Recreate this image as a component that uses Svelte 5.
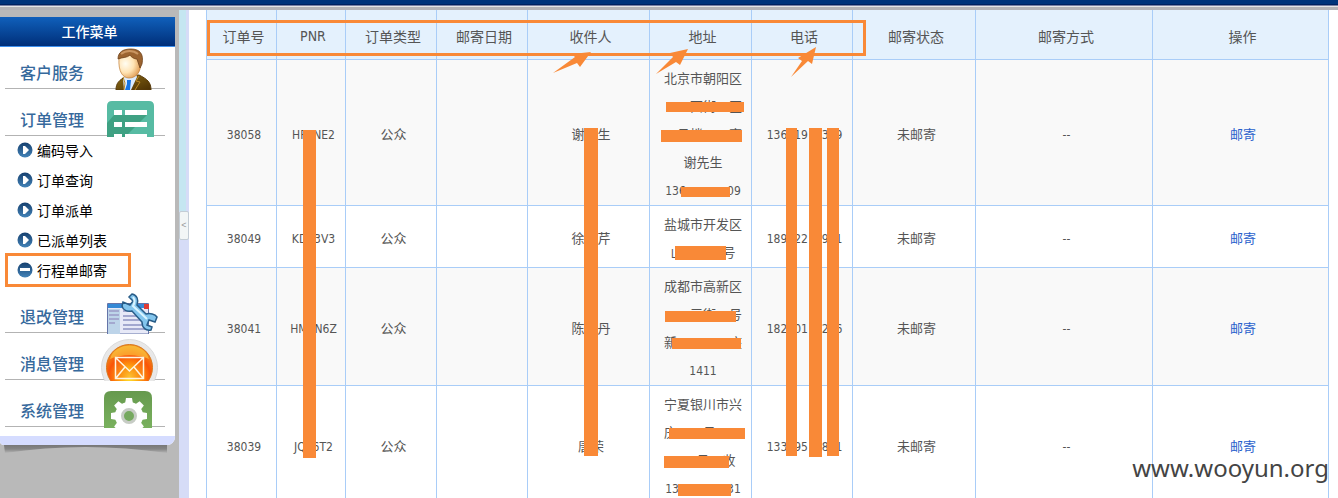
<script>
  const submenu = ['编码导入', '订单查询', '订单派单', '已派单列表', '行程单邮寄'];
  const sections = [
    { label: '客户服务', icon: 'person' },
    { label: '订单管理', icon: 'list', open: true },
    { label: '退改管理', icon: 'tool' },
    { label: '消息管理', icon: 'mail' },
    { label: '系统管理', icon: 'gear' }
  ];
  const columns = [
    { title: '订单号', width: 70 },
    { title: 'PNR', width: 69 },
    { title: '订单类型', width: 91 },
    { title: '邮寄日期', width: 91 },
    { title: '收件人', width: 122 },
    { title: '地址', width: 102 },
    { title: '电话', width: 101 },
    { title: '邮寄状态', width: 123 },
    { title: '邮寄方式', width: 177 },
    { title: '操作', width: 176 }
  ];
  const total = columns.reduce((sum, c) => sum + c.width, 0);
  // \u2007 and \u3000 hold the place of masked digits and characters
  const rows = [
    { id: '38058', pnr: 'HF\u2007NE2', name: '谢\u3000生', phone: '136\u200719\u2007\u20073\u20079',
      address: ['北京市朝阳区', '\u3000\u3000西街\u3000区', '\u3000号楼\u3000\u3000室', '谢先生', '136\u2007\u2007\u2007\u2007\u2007\u200709'] },
    { id: '38049', pnr: 'KD\u20073V3', name: '徐\u3000芹', phone: '189\u200722\u2007\u20079\u20071',
      address: ['盐城市开发区', '山\u3000\u3000\u3000号'] },
    { id: '38041', pnr: 'HM\u2007N6Z', name: '陈\u3000丹', phone: '182\u200701\u2007\u20072\u20076',
      address: ['成都市高新区', '\u3000\u3000三街\u3000号', '新\u3000\u3000\u3000\u3000座', '1411'] },
    { id: '38039', pnr: 'JQ\u20076T2', name: '唐荣', phone: '133\u200795\u2007\u20078\u20071',
      address: ['宁夏银川市兴', '庆\u3000\u3000号\u3000\u3000', '\u3000\u3000号\u3000收', '13\u2007\u2007\u2007\u2007\u2007\u2007\u200731'] }
  ];
  // masks: x, y, width, height inside the content pane
  const masks = [
    [114, 120, 13, 328], [395, 118, 14, 328],
    [597, 118, 11, 328], [620, 118, 13, 329], [638, 118, 12, 328],
    [477, 92, 78, 10], [472, 120, 81, 12], [492, 177, 49, 10],
    [486, 236, 51, 14], [476, 301, 71, 11], [483, 328, 69, 11],
    [480, 418, 76, 11], [475, 446, 65, 12], [489, 474, 53, 12]
  ];
  const arrows = [
    '364,63 386,47 383,44 402,42 391,57 388,53',
    '467,64 484,47 481,43 499,39 491,55 487,52',
    '602,67 613,51 609,48 627,37 623,54 619,51'
  ];
</script>

{#snippet icon(kind)}
  <svg class="icon" width="58" height="42" viewBox="0 0 58 42" aria-hidden="true">
    {#if kind === 'person'}
      <defs>
        <radialGradient id="face" cx=".3" cy=".4" r=".75"><stop stop-color="#fffdf2" /><stop offset=".5" stop-color="#ffe3b3" /><stop offset="1" stop-color="#dc9144" /></radialGradient>
        <linearGradient id="suit" x2="1" y2="1"><stop stop-color="#8d6c14" /><stop offset="1" stop-color="#4b3004" /></linearGradient>
      </defs>
      <path d="M15 42c0-7 3-10 11-14l12-1c8 4 12 7 12 15z" fill="url(#suit)" stroke="#593b0b" />
      <path d="M22 30l5-3 8-1 1 3-6 13h-7z" fill="#dcecff" />
      <path d="M26 32l4 0-1 10h-5l2-6z" fill="#1675e5" />
      <path d="M22 29l2 6-1 7M38 28l-3 5 4 1-5 8" fill="none" stroke="#bd8a27" />
      <path d="M18 10C17 24 22 30 28 30c8 0 12-7 12-16 0-9-19-10-22-4z" fill="url(#face)" stroke="#c27d35" stroke-width=".7" />
      <path d="M17 11c0-7 5-10 13-10 9 0 13 5 11 15l-2 4-3-9c-3 0-6-2-7-4-3 3-7 2-12 4z" fill="#9b632f" stroke="#6e421c" stroke-width=".8" />
      <path d="M20 6c5-4 12-4 17 0" fill="none" stroke="#c99561" stroke-width="2" />
    {:else if kind === 'list'}
      <path d="M6 42V11q0-5 5-5h37q5 0 5 5v31z" fill="#57bba3" />
      <path d="M6 28L13 20h33L24 42H6z" fill="#3fa183" />
      <path d="M13 15h8v5h-8zM24 15h22v5H24zM13 27h8v5h-8zM24 27h22v5H24zM13 39h8v3h-8zM24 39h22v3H24z" fill="#fff" />
    {:else if kind === 'tool'}
      <path d="M6.500 11.500h41V42h-41z" fill="#e7e9f7" stroke="#6574a8" />
      <path d="M7 12h40v4H7z" fill="#3489d6" /><path d="M43 12h5v5h-5z" fill="#df3c35" />
      <path d="M7 17h12v25H7z" fill="#bdd4e9" />
      <path d="M8 19h10M8 23h10M8 27h10M8 31h6M22 19h20M22 24h20M22 28h20M22 33h20M22 37h24" stroke="#a3a8cf" stroke-width="2" />
      <path d="M31 2l-3 3 4 4-3 4-7-3-1 4c1 4 5 6 10 5l10 11c0 6 4 9 9 8l1-3-5-2 2-5 6 2 2-5c-2-3-7-4-11-3l-9-9c2-5 0-10-5-11z" fill="#83c5ed" stroke="#295d88" stroke-width="1.500" />
      <path d="M32 5q3 4 0 9l14 13" fill="none" stroke="#d9f4ff" stroke-width="2" />
    {:else if kind === 'mail'}
      <defs>
        <radialGradient id="orb" cx=".5" cy=".7" r=".65"><stop stop-color="#fff03a" /><stop offset=".25" stop-color="#ffb514" /><stop offset=".7" stop-color="#fa5407" /><stop offset="1" stop-color="#f08b1b" /></radialGradient>
      </defs>
      <circle cx="28.500" cy="28.500" r="28" fill="#e8e8e8" stroke="#dadada" />
      <circle cx="28.500" cy="28.500" r="23" fill="url(#orb)" stroke="#d8761b" />
      <path d="M9 20c5-18 34-18 39 0-11-5-28-5-39 0z" fill="#ffe24f" opacity=".5" />
      <path d="M14.500 18.500h28v21h-28zM15 19l13.500 13L42 19M15 39l9-11M42 39l-9-11" fill="#f76b1d" fill-opacity=".35" stroke="#fff5df" stroke-width="1.500" />
    {:else}
      <defs><linearGradient id="tile" x2="0" y2="1"><stop stop-color="#66994e" /><stop offset="1" stop-color="#79b15e" /></linearGradient></defs>
      <path d="M3 42V12q0-7 7-7h34q7 0 7 7v30z" fill="url(#tile)" />
      <g fill="#fff">
        {#each [0, 45, 90, 135, 180, 225, 270, 315] as angle}
          <path d="M24 18l1-6h6l1 6z" transform="rotate({angle} 28 30)" />
        {/each}
      </g>
      <circle cx="28" cy="30" r="14" fill="#fff" />
      <circle cx="28" cy="30" r="6.500" fill="#76a95f" stroke="#c7ccc5" stroke-width="3" />
    {/if}
  </svg>
{/snippet}

<div class="app">
  <header class="topbar"></header>
  <div class="body">
    <aside>
      <div class="panel">
        <h1>工作菜单</h1>
        <nav>
          {#each sections as s}
            <a class="section" href="#menu"><span>{s.label}</span>{@render icon(s.icon)}</a>
            {#if s.open}
              <ul>
                {#each submenu as label, i}
                  <li class:active={i === 4}>
                    <a href="#list">
                      <svg width="16" height="16" viewBox="0 0 16 16" aria-hidden="true">
                        <defs><linearGradient id="ball{i}" x2="0" y2="1"><stop stop-color="#16406f" /><stop offset="1" stop-color="#4484b9" /></linearGradient></defs>
                        <circle cx="8" cy="8" r="7.500" fill="url(#ball{i})" />
                        {#if i === 4}<path d="M3 6h10v3H3z" fill="#fff" />{:else}<path d="M6 4h2l4 4-4 4H6z" fill="#fff" />{/if}
                      </svg>{label}
                    </a>
                  </li>
                {/each}
              </ul>
            {/if}
          {/each}
        </nav>
        <div class="foot"></div>
      </div>
      <svg class="shade" width="175" height="14" viewBox="0 0 175 14" aria-hidden="true">
        <defs>
          <linearGradient id="fade" x2="0" y2="1"><stop stop-color="#777" /><stop offset=".5" stop-color="#858585" /><stop offset="1" stop-color="#b5b5b5" /></linearGradient>
        </defs>
        <path d="M4 0h163v8Q85-4 5 8z" fill="url(#fade)" />
      </svg>
    </aside>
    <div class="splitter"><button aria-label="收起菜单">&lt;</button></div>
    <main>
      <table>
        <colgroup>
          {#each columns as c}<col style="width:{(c.width / total) * 100}%" />{/each}
        </colgroup>
        <thead><tr>{#each columns as c}<th>{c.title}</th>{/each}</tr></thead>
        <tbody>
          {#each rows as r}
            <tr>
              <td class="num">{r.id}</td>
              <td class="num">{r.pnr}</td>
              <td>公众</td>
              <td></td>
              <td>{r.name}</td>
              <td>{#each r.address as line}<div class:num={line.startsWith('1')}>{line}</div>{/each}</td>
              <td class="num">{r.phone}</td>
              <td>未邮寄</td>
              <td class="num">--</td>
              <td><a href="#mail">邮寄</a></td>
            </tr>
          {/each}
        </tbody>
      </table>
      <svg class="marks" aria-hidden="true">
        {#each masks as [x, y, w, h]}<rect {x} {y} width={w} height={h} />{/each}
        {#each arrows as points}<polygon {points} />{/each}
        <rect class="frame" x="19.500" y="11.500" width="656" height="33" />
      </svg>
      <div class="watermark">www.wooyun.org</div>
    </main>
  </div>
</div>

<style>
  :global(body) { margin: 0; }
  .app {
    height: 100vh; overflow: hidden; display: flex; flex-direction: column;
    font-family: "DejaVu Sans Condensed", "Noto Sans CJK SC", sans-serif;
    background: #b9b9b9;
  }
  .topbar {
    flex: none; height: 10px;
    background: linear-gradient(#00337a 0 4px, #002260 4px 5px, #7a80a4 5px 6px, #e5e5e5 6px 7px, #b5b3b6 7px);
  }
  .body { flex: 1; min-height: 0; display: flex; }
  aside { flex: none; width: 179px; padding-top: 7px; box-sizing: border-box; }
  .panel { width: 175px; background: #fff; border-radius: 0 0 8px 4px; overflow: hidden; }
  h1 {
    margin: 0; height: 29px; line-height: 29px; padding-left: 4px; text-align: center;
    font-family: "Noto Sans CJK SC", sans-serif; font-size: 14px; font-weight: 500; color: #fff;
    background: linear-gradient(#1060bb, #002f79); border-bottom: 1px solid #3d90ee;
  }
  nav { padding: 1px 10px 9px 5px; }
  .section {
    display: flex; justify-content: space-between; align-items: flex-end;
    box-sizing: border-box; height: 41px; padding: 0 6px 0 15px; margin-top: 6px;
    border-bottom: 1px solid #b3b3b3; text-decoration: none;
    font-family: "Noto Sans CJK SC", sans-serif; font-size: 16px; line-height: 32px; font-weight: 500; color: #36699c;
  }
  .section:first-child { margin-top: 0; }
  .icon { display: block; margin-bottom: -2px; position: relative; }
  ul { list-style: none; margin: 0; padding: 0; }
  li { box-sizing: border-box; height: 30px; display: flex; align-items: center; padding: 0 0 2px 12px; }
  li a {
    display: flex; align-items: center; gap: 4px; color: #000; text-decoration: none;
    font-family: "Noto Sans CJK SC", sans-serif; font-size: 14px; line-height: 20px;
  }
  li.active { position: relative; }
  li.active::after { content: ""; position: absolute; left: 0; top: -3px; width: 120px; height: 28px; border: 3px solid #f98937; }
  .foot { height: 9px; background: #d5dcff; }
  .shade { display: block; }
  .splitter {
    flex: none; width: 10px; box-sizing: border-box; padding-top: 201px;
    background: linear-gradient(#c5e6f1, #c5e6f1) 0 0 / 7px 201px no-repeat, #d6dcf7;
  }
  .splitter button {
    display: block; width: 10px; height: 29px; padding: 0; border: 1px solid #c3cdd5; border-radius: 2px;
    background: #f2f6f6; color: #999; font-size: 9px; line-height: 27px;
  }
  main { flex: 1; min-width: 0; position: relative; overflow: hidden; background: #fff; padding: 0 9px 0 17px; }
  table { width: 100%; border-collapse: separate; border-spacing: 0; table-layout: fixed; border-left: 1px solid #a9cdf8; color: #555; }
  th, td { border-right: 1px solid #a9cdf8; border-bottom: 1px solid #a9cdf8; text-align: center; font-weight: 400; }
  th { box-sizing: content-box; height: 46px; padding: 3px 0 0 4px; background: #e4f1fd; font-size: 14px; }
  td { padding: 5px 0 0 5px; font-size: 13px; line-height: 28px; white-space: pre; }
  .num { font-size: 12px; }
  tbody tr:nth-child(odd) { background: #f9f9f9; }
  td a { color: #2860cc; text-decoration: none; }
  .marks { position: absolute; left: 0; top: 0; width: 100%; height: 100%; fill: #f98937; pointer-events: none; }
  .frame { fill: none; stroke: #f98937; stroke-width: 3; }
  .watermark {
    position: absolute; right: 9px; bottom: 10px;
    font-family: "Noto Sans", sans-serif; font-size: 24px; line-height: 40px; color: #444;
  }
</style>
